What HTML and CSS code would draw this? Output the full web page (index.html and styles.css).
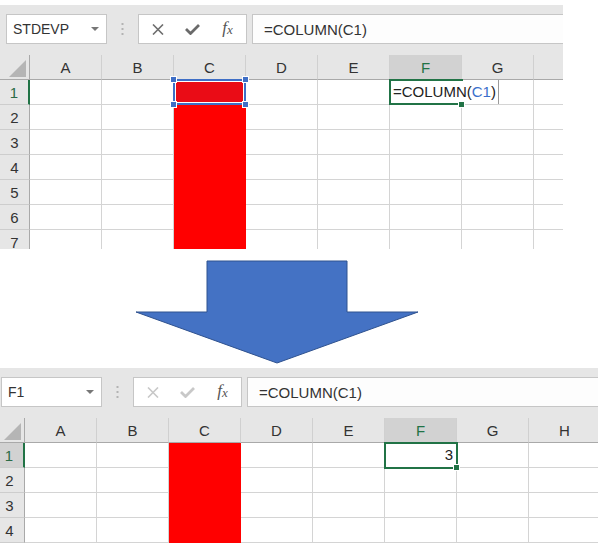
FILE: index.html
```html
<!DOCTYPE html>
<html lang="ja">
<head>
    <meta charset="UTF-8">
    <title>COLUMN関数</title>
    <link rel="stylesheet" href="styles.css">
</head>
<body>
    <!-- Before: editing F1 -->
    <div class="sheet sheet-top">
        <div class="sheet-inner">
            <div class="toolbar">
                <div class="namebox">
                    <span>STDEVP</span>
                    <span class="dropdown"></span>
                </div>
                <div class="grip">
                    <svg width="3" height="13" viewBox="0 0 3 13"><rect x="0.5" y="0" width="2" height="2" fill="#b3b3b3"/><rect x="0.5" y="5" width="2" height="2" fill="#b3b3b3"/><rect x="0.5" y="10" width="2" height="2" fill="#b3b3b3"/></svg>
                </div>
                <div class="fxbtns">
                    <span class="btn">
                        <svg width="12" height="11" viewBox="0 0 12 11"><path d="M1 0.5 L11 10.5 M11 0.5 L1 10.5" stroke="#6e6e6e" stroke-width="1.6" fill="none"/></svg>
                    </span>
                    <span class="btn">
                        <svg width="15" height="11" viewBox="0 0 15 11"><path d="M1 5 L5.5 9.5 L14 1" stroke="#6a6a6a" stroke-width="2.8" fill="none"/></svg>
                    </span>
                    <span class="btn fx"><i>f</i><i class="x">x</i></span>
                </div>
                <div class="formula">=COLUMN(C1)</div>
            </div>

            <div class="row hdr">
                <div class="rh corner"><span class="tri"></span></div>
                <div class="ch">A</div><div class="ch">B</div><div class="ch">C</div><div class="ch">D</div>
                <div class="ch">E</div><div class="ch on">F</div><div class="ch">G</div><div class="ch"></div>
            </div>
            <div class="row">
                <div class="rh mark">1</div>
                <div class="c"></div><div class="c"></div>
                <div class="c red picked"><span class="h tl"></span><span class="h tr"></span><span class="h bl"></span><span class="h br"></span></div>
                <div class="c"></div><div class="c"></div>
                <div class="c active">
                    <div class="editor">=COLUMN(<span class="ref">C1</span>)</div>
                    <div class="frame open"></div>
                    <span class="fill"></span>
                </div>
                <div class="c"></div><div class="c"></div>
            </div>
            <div class="row">
                <div class="rh">2</div>
                <div class="c"></div><div class="c"></div><div class="c red"></div><div class="c"></div>
                <div class="c"></div><div class="c"></div><div class="c"></div><div class="c"></div>
            </div>
            <div class="row">
                <div class="rh">3</div>
                <div class="c"></div><div class="c"></div><div class="c red"></div><div class="c"></div>
                <div class="c"></div><div class="c"></div><div class="c"></div><div class="c"></div>
            </div>
            <div class="row">
                <div class="rh">4</div>
                <div class="c"></div><div class="c"></div><div class="c red"></div><div class="c"></div>
                <div class="c"></div><div class="c"></div><div class="c"></div><div class="c"></div>
            </div>
            <div class="row">
                <div class="rh">5</div>
                <div class="c"></div><div class="c"></div><div class="c red"></div><div class="c"></div>
                <div class="c"></div><div class="c"></div><div class="c"></div><div class="c"></div>
            </div>
            <div class="row">
                <div class="rh">6</div>
                <div class="c"></div><div class="c"></div><div class="c red"></div><div class="c"></div>
                <div class="c"></div><div class="c"></div><div class="c"></div><div class="c"></div>
            </div>
            <div class="row">
                <div class="rh">7</div>
                <div class="c"></div><div class="c"></div><div class="c red"></div><div class="c"></div>
                <div class="c"></div><div class="c"></div><div class="c"></div><div class="c"></div>
            </div>
        </div>
    </div>

    <!-- Arrow -->
    <svg class="arrow" width="598" height="119" viewBox="0 0 598 119">
        <polygon points="207,12 347,12 347,63 418,63 277,114 136,63 207,63" fill="#4472c4" stroke="#2f528f" stroke-width="1"/>
    </svg>

    <!-- After: result in F1 -->
    <div class="sheet sheet-bottom">
        <div class="sheet-inner">
            <div class="toolbar">
                <div class="namebox">
                    <span>F1</span>
                    <span class="dropdown"></span>
                </div>
                <div class="grip">
                    <svg width="3" height="13" viewBox="0 0 3 13"><rect x="0.5" y="0" width="2" height="2" fill="#b3b3b3"/><rect x="0.5" y="5" width="2" height="2" fill="#b3b3b3"/><rect x="0.5" y="10" width="2" height="2" fill="#b3b3b3"/></svg>
                </div>
                <div class="fxbtns">
                    <span class="btn">
                        <svg width="12" height="11" viewBox="0 0 12 11"><path d="M1 0.5 L11 10.5 M11 0.5 L1 10.5" stroke="#c8c8c8" stroke-width="1.6" fill="none"/></svg>
                    </span>
                    <span class="btn">
                        <svg width="15" height="11" viewBox="0 0 15 11"><path d="M1 5 L5.5 9.5 L14 1" stroke="#c8c8c8" stroke-width="2.8" fill="none"/></svg>
                    </span>
                    <span class="btn fx"><i>f</i><i class="x">x</i></span>
                </div>
                <div class="formula">=COLUMN(C1)</div>
            </div>

            <div class="row hdr">
                <div class="rh corner"><span class="tri"></span></div>
                <div class="ch">A</div><div class="ch">B</div><div class="ch">C</div><div class="ch">D</div>
                <div class="ch">E</div><div class="ch on">F</div><div class="ch">G</div><div class="ch">H</div>
            </div>
            <div class="row">
                <div class="rh mark on">1</div>
                <div class="c"></div><div class="c"></div><div class="c red"></div><div class="c"></div>
                <div class="c"></div>
                <div class="c active num">3
                    <div class="frame"></div>
                    <span class="fill"></span>
                </div>
                <div class="c"></div><div class="c"></div>
            </div>
            <div class="row">
                <div class="rh">2</div>
                <div class="c"></div><div class="c"></div><div class="c red"></div><div class="c"></div>
                <div class="c"></div><div class="c"></div><div class="c"></div><div class="c"></div>
            </div>
            <div class="row">
                <div class="rh">3</div>
                <div class="c"></div><div class="c"></div><div class="c red"></div><div class="c"></div>
                <div class="c"></div><div class="c"></div><div class="c"></div><div class="c"></div>
            </div>
            <div class="row">
                <div class="rh">4</div>
                <div class="c"></div><div class="c"></div><div class="c red"></div><div class="c"></div>
                <div class="c"></div><div class="c"></div><div class="c"></div><div class="c"></div>
            </div>
        </div>
    </div>
</body>
</html>
```

FILE: styles.css
```css
/* Base */
* {
    margin: 0;
    padding: 0;
    box-sizing: border-box;
}

body {
    background: #fff;
    font-family: 'Liberation Sans', Arial, sans-serif;
    color: #262626;
    width: 598px;
    overflow: hidden;
}

/* Sheet frames (cropped screenshots) */
.sheet {
    overflow: hidden;
    background: #fff;
}

.sheet-top {
    width: 563px;
    height: 244px;
    margin-top: 5px;
}

.sheet-bottom {
    width: 598px;
    height: 175px;
}

.sheet-inner {
    width: 606px;
}

.sheet-bottom .sheet-inner {
    margin-left: -5px;
}

/* Formula bar */
.toolbar {
    display: flex;
    height: 50px;
    padding-top: 9px;
    background: #e6e6e6;
}

.namebox {
    width: 101px;
    height: 30px;
    margin-left: 6px;
    padding: 0 6px 0 6px;
    display: flex;
    align-items: center;
    justify-content: space-between;
    background: #fff;
    border: 1px solid #c6c6c6;
    font-size: 14px;
    color: #333;
}

.dropdown {
    width: 0;
    height: 0;
    border-left: 4px solid transparent;
    border-right: 4px solid transparent;
    border-top: 4px solid #777;
    margin-right: 1px;
}

.grip {
    width: 31px;
    height: 30px;
    display: flex;
    align-items: center;
    justify-content: center;
}

.fxbtns {
    width: 109px;
    height: 30px;
    padding-left: 1px;
    display: flex;
    align-items: center;
    background: #fff;
    border: 1px solid #c6c6c6;
}

.btn {
    width: 35px;
    display: flex;
    align-items: center;
    justify-content: center;
}

.fx {
    font-family: 'Liberation Serif', serif;
    font-size: 17px;
    color: #555;
    padding-bottom: 3px;
}

.fx .x {
    font-size: 13px;
    margin-left: 0;
    position: relative;
    top: 2px;
}

.formula {
    flex: 1;
    height: 30px;
    margin-left: 5px;
    margin-right: -2px;
    padding-left: 11px;
    display: flex;
    align-items: center;
    background: #fdfdfd;
    border: 1px solid #c6c6c6;
    font-size: 15px;
    color: #333;
}

/* Grid */
.row {
    display: flex;
    height: 25px;
}

.rh {
    width: 30px;
    flex: none;
    display: flex;
    align-items: center;
    justify-content: center;
    background: #e6e6e6;
    border-right: 1px solid #a9a9a9;
    border-bottom: 1px solid #cdcdcd;
    font-size: 15px;
    color: #333;
}

.rh.mark {
    color: #2b6b47;
    border-right: 2px solid #217346;
}

.rh.on {
    background: #d2d2d2;
}

.corner {
    align-items: flex-end;
    justify-content: flex-end;
    padding: 0 3px 2px 0;
    border-bottom-color: #a9a9a9;
}

.tri {
    width: 0;
    height: 0;
    border-left: 17px solid transparent;
    border-bottom: 17px solid #b5b5b5;
}

.ch {
    width: 72px;
    flex: none;
    display: flex;
    align-items: center;
    justify-content: center;
    background: #e6e6e6;
    border-right: 1px solid #d0d0d0;
    border-bottom: 1px solid #a9a9a9;
    font-size: 15px;
    color: #333;
}

.ch.on {
    background: #d2d2d2;
    color: #217346;
}

.c {
    width: 72px;
    flex: none;
    position: relative;
    border-right: 1px solid #d4d4d4;
    border-bottom: 1px solid #d4d4d4;
}

.c.red {
    background: #ff0000;
    border-color: #ff0000;
}

.c.picked {
    background: #ea0c16;
}

.c.picked::before {
    content: '';
    position: absolute;
    top: -1px;
    left: -1px;
    right: -1px;
    bottom: -1px;
    border: 2px solid #3f6fc6;
    box-shadow: inset 0 0 0 1px #fff;
}

.h {
    position: absolute;
    width: 7px;
    height: 7px;
    background: #3f6fc6;
    border: 1px solid #fff;
    z-index: 2;
}

.h.tl { top: -4px; left: -4px; }
.h.tr { top: -4px; right: -4px; }
.h.bl { bottom: -4px; left: -4px; }
.h.br { bottom: -4px; right: -4px; }

/* Active cell */
.editor {
    position: absolute;
    top: 0;
    left: 0;
    width: 109px;
    height: 24px;
    padding-left: 3px;
    background: #fff;
    border-right: 1px solid #9a9a9a;
    font-size: 15px;
    line-height: 24px;
    white-space: nowrap;
    color: #222;
    z-index: 1;
}

.editor .ref {
    color: #3b6fcb;
}

.frame {
    position: absolute;
    top: -1px;
    left: -1px;
    width: 74px;
    height: 27px;
    border: 2px solid #217346;
    z-index: 2;
}

.frame.open {
    height: 26px;
    border-right: none;
}

.fill {
    position: absolute;
    right: -4px;
    bottom: -4px;
    width: 7px;
    height: 7px;
    background: #217346;
    border: 1px solid #fff;
    z-index: 3;
}

.c.num {
    padding-right: 3px;
    text-align: right;
    font-size: 15px;
    line-height: 24px;
    color: #222;
}

/* Arrow between the two shots */
.arrow {
    display: block;
}
```
